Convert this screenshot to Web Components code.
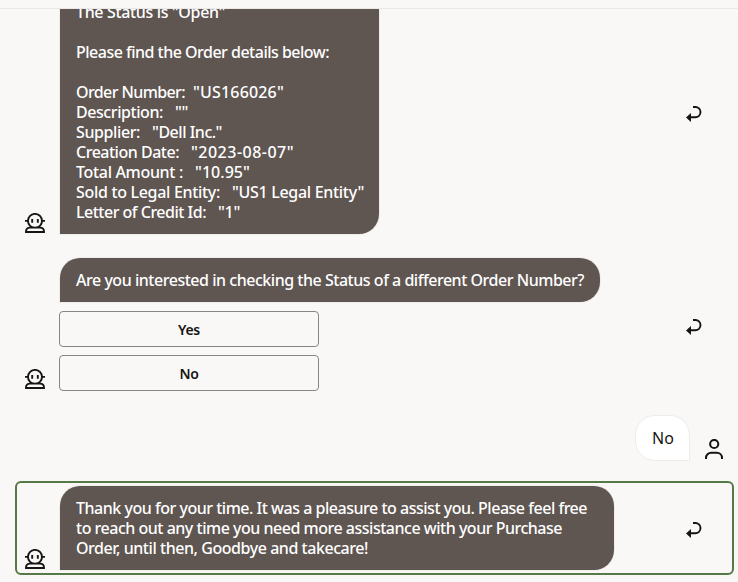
<!DOCTYPE html>
<html lang="en"><head><meta charset="utf-8"><title>Assistant</title>
<style>
html,body{margin:0;height:100%;overflow:hidden;background:#f9f8f6}
</style></head><body>
<chat-window>
 <chat-row>
  <chat-bubble style="width:319px">
   <chat-line w="149">The Status is "Open"</chat-line>
   <chat-line></chat-line>
   <chat-line w="253">Please find the Order details below:</chat-line>
   <chat-line></chat-line>
   <chat-pair gap="8"><chat-line w="109">Order Number:</chat-line><chat-line w="91">"US166026"</chat-line></chat-pair>
   <chat-pair gap="12"><chat-line w="87">Description:</chat-line><chat-line w="13">""</chat-line></chat-pair>
   <chat-pair gap="12"><chat-line w="64">Supplier:</chat-line><chat-line w="70">"Dell Inc."</chat-line></chat-pair>
   <chat-pair gap="12"><chat-line w="103">Creation Date:</chat-line><chat-line w="103">"2023-08-07"</chat-line></chat-pair>
   <chat-pair gap="12"><chat-line w="107">Total Amount :</chat-line><chat-line w="55">"10.95"</chat-line></chat-pair>
   <chat-pair gap="12"><chat-line w="144">Sold to Legal Entity:</chat-line><chat-line w="132">"US1 Legal Entity"</chat-line></chat-pair>
   <chat-pair gap="12"><chat-line w="130">Letter of Credit Id:</chat-line><chat-line w="22">"1"</chat-line></chat-pair>
  </chat-bubble>
 </chat-row>
 <chat-row lifted>
  <chat-bubble first style="width:540px">
   <chat-line w="508">Are you interested in checking the Status of a different Order Number?</chat-line>
  </chat-bubble>
  <chat-choice style="margin-top:9px">Yes</chat-choice>
  <chat-choice style="margin-top:8px">No</chat-choice>
 </chat-row>
 <user-row><chat-line w="22">No</chat-line></user-row>
 <chat-row focused>
  <chat-bubble first style="width:554px">
   <chat-line w="511">Thank you for your time. It was a pleasure to assist you. Please feel free</chat-line>
   <chat-line w="486">to reach out any time you need more assistance with your Purchase</chat-line>
   <chat-line w="292">Order, until then, Goodbye and takecare!</chat-line>
  </chat-bubble>
 </chat-row>
</chat-window>
<script>
const define=(name,html,ready)=>customElements.define(name,class extends HTMLElement{
  constructor(){super();this.attachShadow({mode:'open'}).innerHTML=html}
  connectedCallback(){if(ready)ready(this)}
});

define('chat-window',`<style>
:host{display:flex;flex-direction:column;height:582px;overflow:hidden;background:#f9f8f6;color:#161513;font:16px/20px "Noto Sans","Liberation Sans",sans-serif}
header{height:8px;flex:none;border-bottom:1px solid #ebe9e7;background:#f9f8f6}
main{flex:1;min-height:0;overflow:hidden;display:flex;flex-direction:column}
.log{margin-top:-19px;display:flex;flex-direction:column}
</style><header></header><main><div class="log"><slot></slot></div></main>`);

define('bot-icon',`<style>:host{display:block;width:20px;height:20px;flex:none}svg{display:block}</style>
<svg width="20" height="20" viewBox="0 0 20 20" fill="none" stroke="#161513" stroke-width="1.9">
<circle cx="10" cy="7.9" r="7"/><path d="M0 7.9h3M17 7.9h3M7.2 6v3.8M12.8 6v3.8"/>
<path d="M1 19v-.4c0-2.5 1.5-4 4-4h10c2.5 0 4 1.5 4 4v.4z" fill="#f9f8f6"/></svg>`);

define('return-icon',`<style>:host{display:block;width:16px;height:16px;flex:none}svg{display:block}</style>
<svg width="16" height="16" viewBox="0 0 16 16"><path d="M7 1h2.2a5 5 0 0 1 5.3 5.1c0 3.2-2.3 5.1-5.3 5.1H4" fill="none" stroke="#161513" stroke-width="1.9"/><path d="M0 11.5L5 7v9z" fill="#161513"/></svg>`);

define('user-icon',`<style>:host{display:block;width:18px;height:20px;flex:none}svg{display:block}</style>
<svg width="18" height="20" viewBox="0 0 18 20" fill="none" stroke="#161513" stroke-width="2"><circle cx="9.2" cy="5" r="4.1"/><path d="M1 20v-1c0-3.2 2.3-5.2 5.3-5.2h5.4c3 0 5.3 2 5.3 5.2v1"/></svg>`);

define('chat-row',`<style>
:host{display:block;margin-bottom:24px}
.row{display:flex;align-items:center;box-sizing:border-box;padding:0 36px 0 25px}
.icon{align-self:flex-end;padding-bottom:1px}
.body{flex:1;display:flex;flex-direction:column;align-items:flex-start;padding-left:15px}
return-icon{margin-top:4px}
:host([lifted]) .icon{padding-bottom:2px}
:host([focused]){margin:20px 4px 0 15px}
:host([focused]) .row{border:2px solid #567a45;border-radius:6px;padding:3px 30px 3px 8px}
</style><div class="row"><bot-icon class="icon"></bot-icon><div class="body"><slot></slot></div><return-icon></return-icon></div>`);

define('chat-bubble',`<style>
:host{display:block;box-sizing:border-box;padding:12px 16px;background:#5f5652;color:#fff;font-weight:500;border-radius:0 0 20px 0;box-shadow:0 0 0 1px #efedeb}
:host([first]){border-radius:20px 20px 20px 0}
</style><slot></slot>`);

define('chat-pair',`<style>:host{display:flex;height:20px}</style><slot></slot>`,
  el=>{el.style.columnGap=el.getAttribute('gap')+'px'});

define('chat-choice',`<style>
:host{display:block;margin-left:-1px}
button{display:block;width:260px;height:36px;box-sizing:border-box;border:1px solid #8b8580;border-radius:4px;background:transparent;color:#161513;font:600 14px/20px "Noto Sans",sans-serif;padding:2px 0 0;letter-spacing:-.3px}
</style><button><slot></slot></button>`);

define('user-row',`<style>
:host{display:flex;justify-content:flex-end;align-items:flex-end;padding-right:15px}
.bubble{box-sizing:border-box;width:55px;height:46px;padding:12px 16px;border:1px solid #eeeceb;border-radius:20px 20px 0 20px;background:#fff}
user-icon{margin:0 0 2px 15px}
</style><div class="bubble"><slot></slot></div><user-icon></user-icon>`);

/* A single line of text, tracked so that it spans the width given in "w". */
define('chat-line',`<style>:host{display:block;height:20px;white-space:pre}span{display:inline-block;line-height:20px}</style><span><slot></slot></span>`,el=>{
  const w=+el.getAttribute('w');if(!w)return;
  const s=el.shadowRoot.querySelector('span');
  const n=el.textContent.length;
  s.style.letterSpacing=((w-s.getBoundingClientRect().width)/n).toFixed(3)+'px';
});
</script></body></html>
